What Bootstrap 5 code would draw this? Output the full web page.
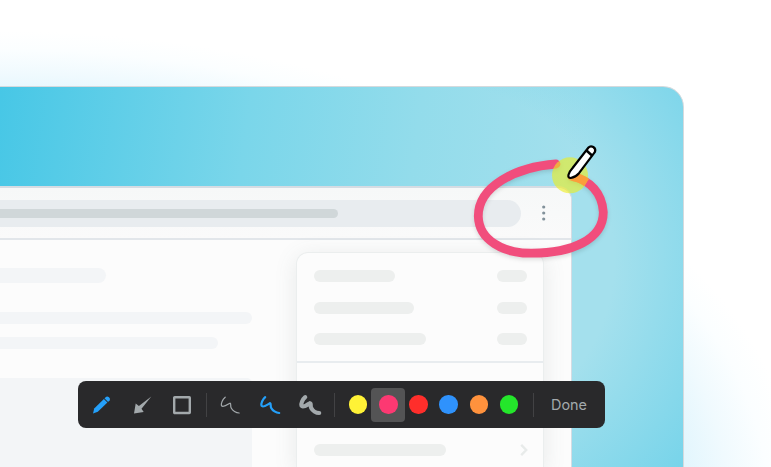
<!DOCTYPE html>
<html lang="en">
<head>
<meta charset="utf-8">
<meta name="viewport" content="width=device-width, initial-scale=1">
<title>Annotate</title>
<link href="https://cdn.jsdelivr.net/npm/bootstrap@5.3.0/dist/css/bootstrap.min.css" rel="stylesheet">
<style>
body{height:467px;padding-top:86px;background:radial-gradient(ellipse 800px 470px at 0 501px,#e0f5fd 85%,#f0fafe 91%,#fbfeff 96%,#fff 100%);font-family:Inter,sans-serif}
.desktop{width:683.5px;height:381px;padding-top:99px;border:1px solid #d5dadd;border-width:1px 1px 0 0;border-radius:0 21px 0 0;
background:radial-gradient(circle at 20px 173px,#77d4ea00 174px,#77d4ea 320px) right top/263px 100% no-repeat,linear-gradient(98deg,#47c7e6 0,#7ad6ea 250px,#93dceb 420px,#a4e0ed 590px)}
.window-pane{width:572px;height:281px;background:#fcfcfc;border:solid #d5dce3;border-width:2px 1px 0 0;border-radius:0 14px 0 0}
.address-row{height:52px;background:linear-gradient(#f6f8f8,#fafafa);border-bottom:2px solid #e2e6ea}
.omnibox{width:521px;height:27px;background:#e8ecef;border-radius:0 14px 14px 0}
.omnibox-fill{width:338px;height:9px;background:#d0d7d9;border-radius:0 5px 5px 0}
.dots{margin-left:20px}
.article{width:252px;padding-top:28px}
.line{background:#f3f5f7;border-radius:0 8px 8px 0}
.l1{width:106px;height:15px;margin-bottom:29px}
.l2{width:252px;height:12px;margin-bottom:13px}
.l3{width:218px;height:12px;margin-bottom:29px}
.picture-box{height:89px;background:#f3f5f7;border-radius:0 5px 0 0}
.menu-panel{width:248px;margin:12px 0 0 44px;height:218px;background:#fcfcfc;border:1px solid #ebeeee;border-bottom:0;border-radius:12px 12px 0 0;box-shadow:0 4px 22px rgba(90,110,110,.13)}
.menu-group{padding:17px 16.500px 16px;gap:19.5px;border-bottom:2px solid #e8ecef}
.pill{height:12px;border-radius:6px;background:#edefee}
.p30{width:30px}.p81{width:81px}.p101{width:100.5px}.p113{width:112.5px}.p132{width:132px}
.menu-more{padding:81px 15px 0 16.500px}
.toolbar-dark{left:78px;top:381px;width:526.5px;height:47px;background:#29292b;border-radius:8px;color:#a3a9ac}
.tool-icons{width:127.5px;padding-left:12px}
.stroke-icons{width:127.5px;padding-left:11.5px}
.tool-icons svg,.stroke-icons svg{margin-right:16px;flex:none}
.rule{width:1px;height:24px;background:#424244}
.swatches{width:198px;padding-left:8px}
.swatch{width:30.2px;height:34px;flex:none}
.swatch i{width:18.5px;height:18.5px}
.selected{width:34px;margin:0 -1.9px;background:#545455;border-radius:4px}
.yel{background:#fff236}.pin{background:#fc3972}.red{background:#ff2e2b}.blu{background:#2f92fc}.ora{background:#ff923d}.gre{background:#24e62b}
.done{width:70px;font-size:14.4px;letter-spacing:0}
.annotation{left:460px;top:135px}
</style>
<script src="https://cdn.jsdelivr.net/npm/bootstrap@5.3.0/dist/js/bootstrap.bundle.min.js"></script>
</head>
<body class="position-relative overflow-hidden">
<main class="desktop overflow-hidden">
  <section class="window-pane overflow-hidden">
    <header class="address-row d-flex align-items-center">
      <div class="omnibox d-flex align-items-center"><div class="omnibox-fill"></div></div>
      <svg class="dots" width="6" height="18" fill="#82919a"><circle cx="2.700" cy="3" r="1.600"/><circle cx="2.700" cy="9" r="1.600"/><circle cx="2.700" cy="15" r="1.600"/></svg>
    </header>
    <div class="d-flex">
      <div class="article"><div class="line l1"></div><div class="line l2"></div><div class="line l3"></div><div class="picture-box"></div></div>
      <aside class="menu-panel">
        <div class="menu-group d-flex flex-column">
          <div class="d-flex justify-content-between"><div class="pill p81"></div><div class="pill p30"></div></div>
          <div class="d-flex justify-content-between"><div class="pill p101"></div><div class="pill p30"></div></div>
          <div class="d-flex justify-content-between"><div class="pill p113"></div><div class="pill p30"></div></div>
        </div>
        <div class="menu-more d-flex justify-content-between"><div class="pill p132"></div><svg width="8" height="12" fill="none" stroke="#e8ebea" stroke-width="2.4"><path d="M1.2 .8 6.200 6l-5 5.200"/></svg></div>
      </aside>
    </div>
  </section>
</main>

<svg class="annotation position-absolute" width="160" height="130" viewBox="0 0 160 130">
  <path d="M96 29C56 32 18 51 18.300 81.500C19 105 43 118.500 72 118.200C111 118 143.500 105 143.300 77C142 58 130 45 112 41.500" fill="none" stroke="#f14d7c" stroke-width="8.800" stroke-linecap="round" stroke-linejoin="round" style="filter:drop-shadow(0 2px 2px #0002)"/>
  <circle cx="110" cy="40.300" r="18" fill="#efee1a" fill-opacity=".6"/>
  <path d="M112 41.500Q120 42.500 126.500 47.500" fill="none" stroke="#fb9d3b" stroke-width="8.800"/>
  <path d="M128.500 12.500Q130.500 10.300 133.300 12Q136.300 14 134.800 17.200L119 38.200Q115.500 42.300 110.700 43Q107.700 43 108.500 39.800Q109.500 36.200 112.400 33.200Z" fill="#fff" stroke="#000" stroke-width="2.200" stroke-linejoin="round"/>
  <path d="M126.500 15.500 132 20.500" stroke="#000" stroke-width="2.500"/>
</svg>

<nav class="toolbar-dark position-absolute d-flex align-items-center" aria-label="Annotation tools">
  <div class="tool-icons d-flex align-items-center">
    <svg width="24" height="24" viewBox="0 0 24 24" fill="#24a0fa"><path d="M3 20.500 4.200 15.500 13.900 6.100 17.400 9.600 7.800 18.800Z"/><path d="M14.500 5.300 16.300 3.700Q17.500 3 18.600 4L19.600 5.100Q20.300 6.200 19.700 7.200L18.100 8.900Z"/></svg>
    <svg width="24" height="24" viewBox="0 0 24 24" fill="#a3a9ac"><path d="M21.300 3.500 11.500 15.700 13.700 19 4 20.500 5.700 10.600 8.900 12.900Z"/></svg>
    <svg width="24" height="24" viewBox="0 0 24 24" fill="none" stroke="#a3a9ac" stroke-width="2.400"><rect x="4.200" y="4.200" width="15.600" height="15.800" rx=".5"/></svg>
  </div>
  <div class="rule"></div>
  <div class="stroke-icons d-flex align-items-center">
    <svg width="24" height="24" viewBox="0 0 24 24" fill="none" stroke="#a3a9ac" stroke-width="1.200" stroke-linecap="round"><path d="M7.200 4.200C4.500 6.500 2.800 10.500 3.500 12.700C5 15 9.500 11.700 12 10.200C13.500 10.500 12 12.700 13.200 15C14.500 17.500 18 20 21.200 20"/></svg>
    <svg width="24" height="24" viewBox="0 0 24 24" fill="none" stroke="#24a0fa" stroke-width="2.200" stroke-linecap="round"><path d="M7.200 4.200C4.500 6.500 2.800 10.500 3.500 12.700C5 15 9.500 11.700 12 10.200C13.500 10.500 12 12.700 13.200 15C14.500 17.500 18 20 21.200 20"/></svg>
    <svg width="24" height="24" viewBox="0 0 24 24" fill="none" stroke="#a3a9ac" stroke-width="4.200" stroke-linecap="round" overflow="visible"><path d="M7.200 4.200C4.500 6.500 2.800 10.500 3.500 12.700C5 15 9.500 11.700 12 10.200C13.500 10.500 12 12.700 13.200 15C14.500 17.500 18 20 21.200 20"/></svg>
  </div>
  <div class="rule"></div>
  <div class="swatches d-flex align-items-center">
    <span class="swatch d-flex align-items-center justify-content-center"><i class="rounded-circle yel"></i></span>
    <span class="swatch selected d-flex align-items-center justify-content-center"><i class="rounded-circle pin"></i></span>
    <span class="swatch d-flex align-items-center justify-content-center"><i class="rounded-circle red"></i></span>
    <span class="swatch d-flex align-items-center justify-content-center"><i class="rounded-circle blu"></i></span>
    <span class="swatch d-flex align-items-center justify-content-center"><i class="rounded-circle ora"></i></span>
    <span class="swatch d-flex align-items-center justify-content-center"><i class="rounded-circle gre"></i></span>
  </div>
  <div class="rule"></div>
  <div class="done text-center">Done</div>
</nav>
</body>
</html>
